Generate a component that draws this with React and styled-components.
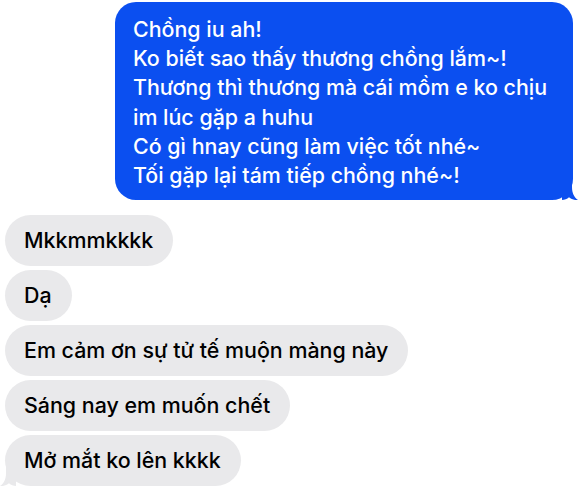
import React from 'react';
import styled, { createGlobalStyle } from 'styled-components';

const GlobalStyle = createGlobalStyle`
  html, body {
    margin: 0;
    padding: 0;
    background: #ffffff;
  }
  body {
    font-family: Inter, "Liberation Sans", "Noto Sans", sans-serif;
    -webkit-font-smoothing: antialiased;
  }
`;

const Thread = styled.div`
  width: 580px;
  height: 490px;
  overflow: hidden;
  display: flex;
  flex-direction: column;
  padding-top: 2px;
  box-sizing: border-box;
`;

const SentBubble = styled.div`
  position: relative;
  align-self: flex-end;
  width: 458px;
  box-sizing: border-box;
  margin-right: 7px;
  margin-bottom: 15px;
  padding: 13px 18px 10px 18px;
  background: #0b4ff0;
  color: #ffffff;
  border-radius: 21px;
  font-size: 21.4px;
  font-weight: 500;
  line-height: 29.2px;
  white-space: pre-line;
`;

const ReceivedList = styled.div`
  display: flex;
  flex-direction: column;
  align-items: flex-start;
  gap: 4px;
  padding-left: 5px;
`;

const ReceivedBubble = styled.div`
  position: relative;
  padding: 11px 20px 11px 19px;
  background: #e9e9eb;
  color: #000000;
  border-radius: 26px;
  font-size: 21.4px;
  font-weight: 500;
  line-height: 29px;
  white-space: nowrap;
`;

const Tail = styled.svg`
  position: absolute;
  bottom: 0;
  width: 16px;
  height: 22px;
  ${(p) => (p.side === 'right' ? 'right: -5px;' : 'left: -5px; transform: scaleX(-1);')}
`;

const BubbleTail = ({ side, color }) => (
  <Tail side={side} viewBox="0 0 16 22">
    <path
      d="M0 0 H10 V9 C10 15 12 19.5 16 22 C12.5 22.4 9.5 21.4 7 19.3 C5 21 2.6 22 0 22 Z"
      fill={color}
    />
  </Tail>
);

const sentText = `Chồng iu ah!
Ko biết sao thấy thương chồng lắm~!
Thương thì thương mà cái mồm e ko chịu im lúc gặp a huhu
Có gì hnay cũng làm việc tốt nhé~
Tối gặp lại tám tiếp chồng nhé~!`;

const received = [
  'Mkkmmkkkk',
  'Dạ',
  'Em cảm ơn sự tử tế muộn màng này',
  'Sáng nay em muốn chết',
  'Mở mắt ko lên kkkk',
];

export default function App() {
  return (
    <>
      <GlobalStyle />
      <Thread>
        <SentBubble>
          {sentText}
          <BubbleTail side="right" color="#0b4ff0" />
        </SentBubble>
        <ReceivedList>
          {received.map((msg, i) => (
            <ReceivedBubble key={i}>
              {msg}
              {i === received.length - 1 && <BubbleTail side="left" color="#e9e9eb" />}
            </ReceivedBubble>
          ))}
        </ReceivedList>
      </Thread>
    </>
  );
}
